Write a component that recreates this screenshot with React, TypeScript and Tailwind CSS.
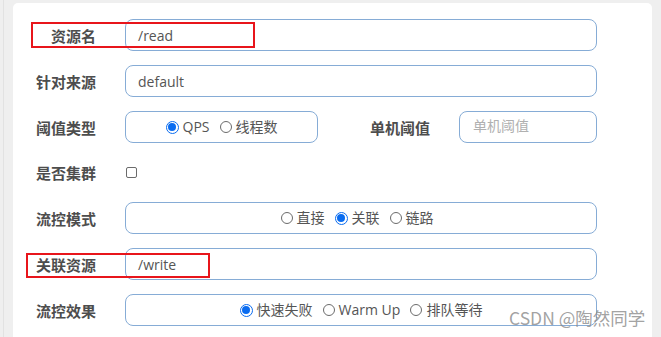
import React from "react";

const FONT = { fontFamily: '"Open Sans", "Noto Sans CJK SC", sans-serif' };
const CJK = { fontFamily: '"Noto Sans CJK SC", "Open Sans", sans-serif' };

function Label({ children, w = "w-[83px]" }: { children: React.ReactNode; w?: string }) {
  return (
    <div className={`${w} shrink-0 text-right text-[15px] font-bold text-[#4d4d4d] leading-none`} style={CJK}>
      {children}
    </div>
  );
}

function Radio({ checked, label }: { checked?: boolean; label: string }) {
  return (
    <span className="flex items-center gap-[4px]">
      {checked ? (
        <span className="w-[13px] h-[13px] rounded-full border-[1.5px] border-[#0a6cf0] flex items-center justify-center bg-white">
          <span className="w-[8px] h-[8px] rounded-full bg-[#0a6cf0]" />
        </span>
      ) : (
        <span className="w-[12px] h-[12px] rounded-full border border-[#6b6b6b] bg-white" />
      )}
      <span className="text-[14px] text-[#555] leading-none">{label}</span>
    </span>
  );
}

const boxCls = "h-[32px] rounded-[8px] border border-[#86acd6] bg-white flex items-center";

export default function App() {
  return (
    <div className="w-[661px] h-[337px] bg-[#efefef] overflow-hidden relative" style={FONT}>
      <div className="absolute left-[3px] top-0 bottom-0 w-px bg-[#e2e2e2]" />
      <div className="ml-[13px] mt-[3px] w-[639px] h-[340px] bg-white rounded-t-[5px] pt-[16px] flex flex-col gap-[14px] relative">
        {/* 资源名 */}
        <div className="flex items-center">
          <Label>资源名</Label>
          <div className={`ml-[29px] w-[472px] ${boxCls} pl-[12px] text-[14px] text-[#555]`}>/read</div>
        </div>
        {/* 针对来源 */}
        <div className="flex items-center">
          <Label>针对来源</Label>
          <div className={`ml-[29px] w-[472px] ${boxCls} pl-[12px] text-[14px] text-[#555]`}>default</div>
        </div>
        {/* 阈值类型 */}
        <div className="flex items-center">
          <Label>阈值类型</Label>
          <div className={`ml-[29px] w-[193px] ${boxCls} justify-center gap-[10px]`}>
            <Radio checked label="QPS" />
            <Radio label="线程数" />
          </div>
          <Label w="w-[112px]">单机阈值</Label>
          <div className={`ml-[29px] w-[138px] ${boxCls} pl-[13px] pb-[3px] text-[14px] text-[#b0b0b0]`} style={CJK}>单机阈值</div>
        </div>
        {/* 是否集群 */}
        <div className="flex items-center h-[31px]">
          <Label>是否集群</Label>
          <div className="ml-[30px] w-[11px] h-[11px] rounded-[2px] border border-[#6b6b6b] bg-white" />
        </div>
        {/* 流控模式 */}
        <div className="flex items-center">
          <Label>流控模式</Label>
          <div className={`ml-[29px] w-[472px] ${boxCls} justify-center gap-[10px] pr-[8px]`}>
            <Radio label="直接" />
            <Radio checked label="关联" />
            <Radio label="链路" />
          </div>
        </div>
        {/* 关联资源 */}
        <div className="flex items-center">
          <Label>关联资源</Label>
          <div className={`ml-[29px] w-[472px] ${boxCls} pl-[12px] text-[14px] text-[#555]`}>/write</div>
        </div>
        {/* 流控效果 */}
        <div className="flex items-center">
          <Label>流控效果</Label>
          <div className={`ml-[29px] w-[472px] ${boxCls} justify-center gap-[10px]`}>
            <Radio checked label="快速失败" />
            <Radio label="Warm Up" />
            <Radio label="排队等待" />
          </div>
        </div>

        {/* red highlight boxes */}
        <div className="absolute left-[18px] top-[19px] w-[224px] h-[26px] border-2 border-[#e8151b]" />
        <div className="absolute left-[13px] top-[250px] w-[184px] h-[25px] border-2 border-[#e8151b]" />
      </div>
      <div className="absolute left-[509px] top-[309px] text-[17.5px] leading-none text-[#8a8a8a]/80" style={CJK}>
        CSDN @陶然同学
      </div>
    </div>
  );
}
